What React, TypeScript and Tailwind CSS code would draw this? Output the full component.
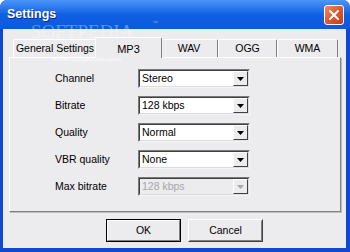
import React from 'react'

const font = { fontFamily: '"Liberation Sans", Arial, sans-serif' }

interface ComboProps {
  value: string
  disabled?: boolean
}

function Combo({ value, disabled }: ComboProps) {
  return (
    <div
      className={`flex h-[19px] w-[112px] items-stretch border border-t-[#7a7a7a] border-l-[#7a7a7a] border-r-[#f4f4f4] border-b-[#f4f4f4] ${
        disabled ? 'bg-[#ecebee]' : 'bg-white'
      }`}
    >
      <div className="flex flex-1 items-stretch border border-t-[#404040] border-l-[#404040] border-r-[#dcdcdc] border-b-[#dcdcdc]">
        <div
          className={`flex flex-1 items-center pl-[2px] text-[10.5px] leading-none ${
            disabled ? 'text-[#a7a6aa]' : 'text-black'
          }`}
        >
          {value}
        </div>
        <div className="flex w-[15px] items-center justify-center border border-t-white border-l-white border-r-[#404040] border-b-[#404040] bg-[#ecebee]">
          <svg width="7" height="4" viewBox="0 0 7 4">
            <path d="M0 0h7L3.5 4z" fill={disabled ? '#a7a6aa' : '#000'} />
          </svg>
        </div>
      </div>
    </div>
  )
}

interface TabProps {
  label: string
  width: string
  active?: boolean
}

function Tab({ label, width, active }: TabProps) {
  if (active) {
    return (
      <div
        className={`relative z-10 -mx-[2px] -mb-[1px] flex h-[21px] ${width} items-start justify-center rounded-t-[2px] border border-b-0 border-t-white border-l-white border-r-[#808080] bg-[#ecebee] pt-[3px] text-[11px]`}
      >
        {label}
      </div>
    )
  }
  return (
    <div
      className={`flex h-[18px] ${width} items-center justify-center rounded-t-[2px] border border-b-0 border-t-white border-l-white border-r-[#808080] bg-[#ecebee] text-[10.5px]`}
    >
      {label}
    </div>
  )
}

const rows = [
  { label: 'Channel', value: 'Stereo' },
  { label: 'Bitrate', value: '128 kbps' },
  { label: 'Quality', value: 'Normal' },
  { label: 'VBR quality', value: 'None' },
  { label: 'Max bitrate', value: '128 kbps', disabled: true },
]

export default function App() {
  return (
    <div className="relative flex h-[252px] w-[350px] flex-col overflow-hidden rounded-t-[7px] bg-[#1048d0] text-black" style={font}>
      {/* title bar */}
      <div className="flex h-[29px] items-center justify-between rounded-t-[7px] bg-gradient-to-b from-[#4a95f8] via-[#0f60e4] to-[#0d58dc] pl-[7px] pr-[6px]">
        <span className="text-[12.5px] font-bold text-white [text-shadow:1px_1px_0_#0a2a8a]">Settings</span>
        <div className="flex h-[20px] w-[20px] items-center justify-center rounded-[3px] border border-white bg-gradient-to-br from-[#f08a66] via-[#e0572f] to-[#c53b18]">
          <svg width="10" height="10" viewBox="0 0 10 10">
            <path d="M1 1l8 8M9 1L1 9" stroke="#fff" strokeWidth="2" strokeLinecap="square" />
          </svg>
        </div>
      </div>

      {/* body */}
      <div className="mb-[4px] ml-[3px] mr-[4px] flex flex-1 flex-col bg-[#ecebee] pl-[6px] pr-[2px] pt-[8px]">
        <div className="flex h-[20px] items-end pl-[4px]">
          <Tab label="General Settings" width="w-[84px]" />
          <Tab label="MP3" width="w-[67px]" active />
          <Tab label="WAV" width="w-[58px]" />
          <Tab label="OGG" width="w-[59px]" />
          <Tab label="WMA" width="w-[61px]" />
        </div>
        <div className="h-[155px] w-[332px] border border-t-white border-l-white border-r-[#808080] border-b-[#808080] shadow-[1px_1px_0_#c0c0c0] pt-[11px] pl-[45px]">
          <div className="grid grid-cols-[83px_112px] gap-y-[8px]">
            {rows.map((r) => (
              <React.Fragment key={r.label}>
                <div className="flex h-[19px] items-center text-[10.5px]">{r.label}</div>
                <Combo value={r.value} disabled={r.disabled} />
              </React.Fragment>
            ))}
          </div>
        </div>
        <div className="mt-[7px] flex gap-[7px] pl-[97px]">
          <div className="flex h-[23px] w-[75px] items-center justify-center border border-black text-[10.5px]">
            <div className="flex h-full w-full items-center justify-center border border-t-white border-l-white border-r-[#808080] border-b-[#808080]">
              OK
            </div>
          </div>
          <div className="flex h-[23px] w-[75px] items-center justify-center border border-t-white border-l-white border-r-[#404040] border-b-[#404040] text-[10.5px]">
            <div className="flex h-full w-full items-center justify-center border border-transparent border-r-[#808080] border-b-[#808080]">
              Cancel
            </div>
          </div>
        </div>
      </div>

      {/* watermark */}
      <div className="pointer-events-none absolute left-[31px] top-[22px] text-[19px] leading-none text-white/35" style={{ fontFamily: '"Liberation Serif", serif' }}>
        SOFTPEDIA
      </div>
      <div className="pointer-events-none absolute left-[152px] top-[20px] text-[6px] leading-none text-white/40">™</div>
      <div className="pointer-events-none absolute left-[52px] top-[55px] text-[8px] leading-none text-white/80">www.softpedia.com</div>
    </div>
  )
}
